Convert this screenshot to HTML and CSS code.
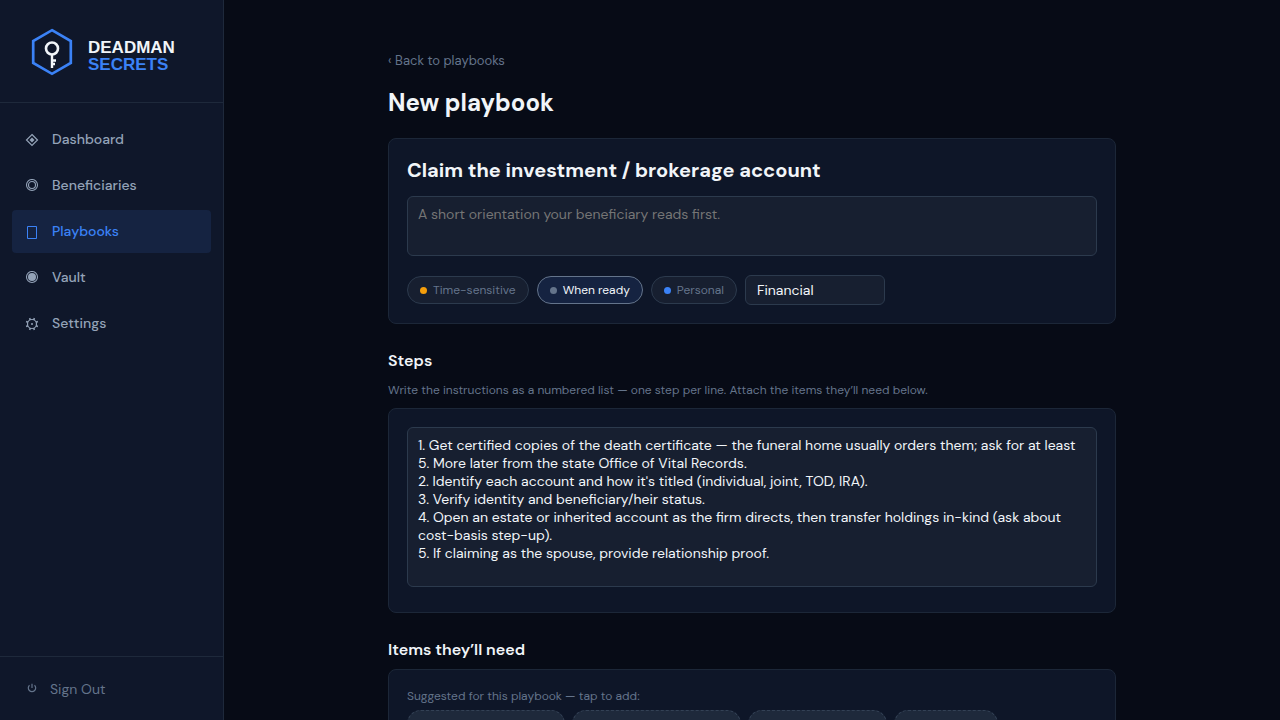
FILE: index.html
```html
<!DOCTYPE html>
<html lang="en">
<head>
<meta charset="utf-8">
<title>New playbook – Deadman Secrets</title>
<meta name="viewport" content="width=device-width, initial-scale=1">
<link rel="stylesheet" href="styles.css">
</head>
<body>
<div class="app">
  <aside class="sidebar">
    <a class="brand" href="#">
      <svg class="brand-mark" viewBox="0 0 44 48" aria-hidden="true">
        <path d="M22 2.200 40.800 13v22L22 45.800 3.200 35V13Z" fill="none" stroke="#3b82f6" stroke-width="2.700"/>
        <circle cx="22" cy="20.500" r="6" fill="none" stroke="#f1f5f9" stroke-width="2.600"/>
        <path d="M22 26.500V40M22 32.500h4M22 36h3" fill="none" stroke="#f1f5f9" stroke-width="2.400"/>
      </svg>
      <span class="brand-name">DEADMAN<span class="brand-accent">SECRETS</span></span>
    </a>
    <nav class="nav">
      <a class="nav-item" href="#"><svg class="icon" viewBox="0 0 14 14" aria-hidden="true"><path d="M7 1.500 12.500 7 7 12.500 1.500 7Z" fill="none" stroke="currentColor" stroke-width="1.200"/><path d="M7 4.500 9.500 7 7 9.500 4.500 7Z" fill="currentColor"/></svg>Dashboard</a>
      <a class="nav-item" href="#"><svg class="icon" viewBox="0 0 14 14" aria-hidden="true"><circle cx="7" cy="6" r="5.500" fill="none" stroke="currentColor" stroke-width="1.100"/><circle cx="7" cy="6" r="3.500" fill="none" stroke="currentColor" stroke-width="1.100"/></svg>Beneficiaries</a>
      <a class="nav-item nav-item-active" href="#" aria-current="page"><svg class="icon" viewBox="0 0 14 14" aria-hidden="true"><path d="M2.500 1.500h9v12h-9Z" fill="none" stroke="currentColor"/></svg>Playbooks</a>
      <a class="nav-item" href="#"><svg class="icon" viewBox="0 0 14 14" aria-hidden="true"><circle cx="7" cy="6" r="5.500" fill="none" stroke="currentColor" stroke-width="1.100"/><circle cx="7" cy="6" r="4" fill="currentColor"/></svg>Vault</a>
      <a class="nav-item" href="#"><svg class="icon" viewBox="0 0 14 14" aria-hidden="true"><circle cx="7" cy="7" r="4.500" fill="none" stroke="currentColor" stroke-width="1.200"/><circle cx="7" cy="7" r="1" fill="currentColor"/><path d="M11 8.700l1.900.7M8.700 11l.7 1.900M5.300 11l-.7 1.900M3 8.700l-1.900.7M3 5.300l-1.900-.7M5.300 3l-.7-1.900M8.700 3l.7-1.900M11 5.300l1.900-.7" stroke="currentColor" stroke-width="1.600"/></svg>Settings</a>
    </nav>
    <div class="sidebar-foot">
      <button class="sign-out" type="button"><svg class="icon-small" viewBox="0 0 12 12" aria-hidden="true"><path d="M3.500 2.200a3.700 3.700 0 1 0 5 0M6 .700v4.300" fill="none" stroke="currentColor" stroke-width="1.200"/></svg>Sign Out</button>
    </div>
  </aside>
  <main class="main">
    <div class="content">
      <a class="back" href="#">‹ Back to playbooks</a>
      <h1 class="page-title">New playbook</h1>
      <section class="card">
        <input class="title-input" type="text" aria-label="Playbook title" value="Claim the investment / brokerage account">
        <textarea class="field intro" aria-label="Introduction" placeholder="A short orientation your beneficiary reads first."></textarea>
        <div class="options">
          <button class="pill" type="button"><span class="dot dot-amber"></span>Time-sensitive</button>
          <button class="pill pill-active" type="button" aria-pressed="true"><span class="dot dot-slate"></span>When ready</button>
          <button class="pill" type="button"><span class="dot dot-blue"></span>Personal</button>
          <input class="field category" type="text" aria-label="Category" value="Financial">
        </div>
      </section>
      <h2 class="section-title">Steps</h2>
      <p class="hint">Write the instructions as a numbered list — one step per line. Attach the items they’ll need below.</p>
      <section class="card">
        <textarea class="field steps" aria-label="Steps">1. Get certified copies of the death certificate — the funeral home usually orders them; ask for at least 5. More later from the state Office of Vital Records.
2. Identify each account and how it's titled (individual, joint, TOD, IRA).
3. Verify identity and beneficiary/heir status.
4. Open an estate or inherited account as the firm directs, then transfer holdings in-kind (ask about cost-basis step-up).
5. If claiming as the spouse, provide relationship proof.</textarea>
      </section>
      <h2 class="section-title">Items they’ll need</h2>
      <section class="card">
        <p class="suggest-label">Suggested for this playbook — tap to add:</p>
        <div class="suggestions">
          <button class="chip" type="button">+ Email &amp; phone access</button>
          <button class="chip" type="button">+ Financial account logins</button>
          <button class="chip" type="button">+ Identity document</button>
          <button class="chip" type="button">+ Estate &amp; will</button>
        </div>
      </section>
    </div>
  </main>
</div>
</body>
</html>
```
FILE: styles.css
```css
* { box-sizing: border-box; }
body {
  margin: 0;
  background: #070b16;
  color: #f1f5f9;
  font-family: "DM Sans", Inter, sans-serif;
  font-optical-sizing: none;
  font-size: 14px;
  line-height: 18px;
}
a { color: inherit; text-decoration: none; }
button, input, textarea { font: inherit; font-optical-sizing: inherit; color: inherit; }
button { cursor: pointer; }
h1, h2, p { margin: 0; }

.app { display: flex; height: 100vh; overflow: hidden; }
.sidebar {
  display: flex;
  flex-direction: column;
  flex: 0 0 224px;
  background: #0f172a;
  border-right: 1px solid #1e293b;
}
.brand {
  display: flex;
  align-items: center;
  gap: 14px;
  padding: 28px 30px 26px;
  border-bottom: 1px solid #1e293b;
}
.brand-mark { width: 44px; height: 48px; }
.brand-name {
  font-family: "Liberation Sans", Arial, sans-serif;
  font-size: 17px;
  font-weight: 700;
  line-height: 17px;
  padding-top: 7px;
}
.brand-accent { display: block; color: #3b82f6; }
.nav { display: flex; flex-direction: column; gap: 3px; padding: 15px 12px; flex: 1; }
.nav-item {
  display: flex;
  align-items: center;
  gap: 13px;
  padding: 12px 13px;
  line-height: 19px;
  border-radius: 4px;
  color: #94a3b8;
  font-weight: 500;
}
.nav-item-active { background: #152341; color: #3b82f6; }
.icon { width: 14px; height: 14px; }
.icon-small { width: 12px; height: 12px; }
.sidebar-foot { padding: 16px 12px; border-top: 1px solid #1e293b; }
.sign-out {
  display: flex;
  align-items: center;
  gap: 12px;
  width: 100%;
  padding: 7px 14px 6px;
  border: 0;
  background: none;
  color: #64748b;
}

.main { flex: 1; overflow: hidden; padding: 52px 32px; }
.content { max-width: 728px; margin: 0 auto; }
.back { display: block; color: #64748b; font-size: 13px; }
.page-title { margin: 16px 0 18px; font-size: 24px; line-height: 34px; font-weight: 700; }
.card {
  padding: 18px;
  background: #0e1628;
  border: 1px solid #1c2738;
  border-radius: 8px;
}
.title-input {
  display: block;
  width: 100%;
  padding: 0;
  border: 0;
  background: none;
  font-size: 20px;
  line-height: 26px;
  font-weight: 700;
}
.field {
  display: block;
  width: 100%;
  padding: 8px 10px;
  background: #171f30;
  border: 1px solid #2c3a4d;
  border-radius: 6px;
  resize: none;
}
.intro { height: 60px; margin-top: 13px; }
.intro::placeholder { color: #757575; }
.options { display: flex; align-items: center; gap: 8px; margin-top: 19px; }
.pill {
  display: flex;
  align-items: center;
  gap: 6px;
  height: 28px;
  padding: 0 12px;
  background: #171f30;
  border: 1px solid #2c3a4d;
  border-radius: 14px;
  color: #64748b;
  font-size: 12px;
}
.pill-active { background: #152341; border-color: #64748b; color: #f1f5f9; }
.dot { width: 7px; height: 7px; border-radius: 50%; }
.dot-amber { background: #f59e0b; }
.dot-slate { background: #64748b; }
.dot-blue { background: #3b82f6; }
.category { width: 140px; height: 30px; padding: 0 11px; }
.section-title { margin: 26px 0 8px; font-size: 16px; line-height: 22px; font-weight: 600; }
.hint { margin: 9px 0; color: #64748b; font-size: 12px; }
.steps { height: 160px; margin-bottom: 7px; }
.suggest-label { color: #64748b; font-size: 12px; line-height: 16px; }
.suggestions { display: flex; flex-wrap: wrap; gap: 7px; margin-top: 6px; }
.chip {
  height: 28px;
  padding: 0 12px;
  background: #1e293b;
  border: 1px dashed #334155;
  border-radius: 14px;
  color: #94a3b8;
  font-size: 12px;
}
```
